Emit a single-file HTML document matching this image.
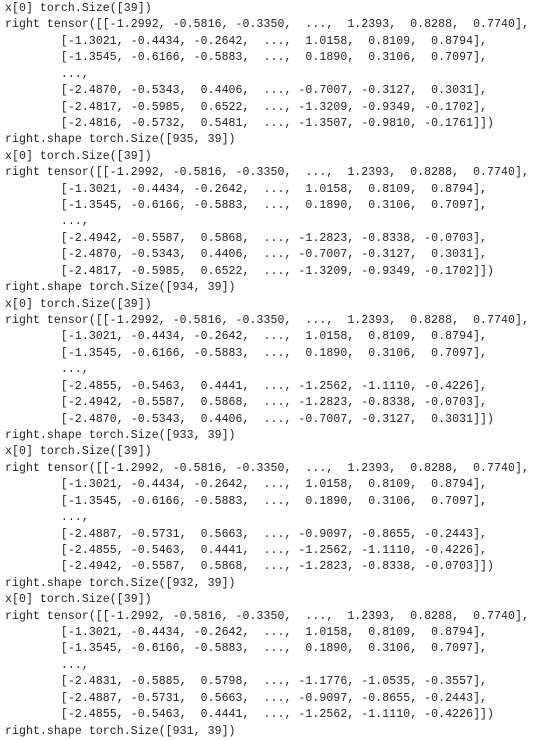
<!DOCTYPE html>
<html><head><style>
html,body{margin:0;padding:0;background:#fff;}
pre{margin:0;padding:1px 0 0 5px;font-family:"Liberation Mono",monospace;font-size:11.5px;letter-spacing:0.085px;line-height:16.42px;color:#212121;white-space:pre;}
</style></head><body><pre>x[0] torch.Size([39])
right tensor([[-1.2992, -0.5816, -0.3350,  ...,  1.2393,  0.8288,  0.7740],
        [-1.3021, -0.4434, -0.2642,  ...,  1.0158,  0.8109,  0.8794],
        [-1.3545, -0.6166, -0.5883,  ...,  0.1890,  0.3106,  0.7097],
        ...,
        [-2.4870, -0.5343,  0.4406,  ..., -0.7007, -0.3127,  0.3031],
        [-2.4817, -0.5985,  0.6522,  ..., -1.3209, -0.9349, -0.1702],
        [-2.4816, -0.5732,  0.5481,  ..., -1.3507, -0.9810, -0.1761]])
right.shape torch.Size([935, 39])
x[0] torch.Size([39])
right tensor([[-1.2992, -0.5816, -0.3350,  ...,  1.2393,  0.8288,  0.7740],
        [-1.3021, -0.4434, -0.2642,  ...,  1.0158,  0.8109,  0.8794],
        [-1.3545, -0.6166, -0.5883,  ...,  0.1890,  0.3106,  0.7097],
        ...,
        [-2.4942, -0.5587,  0.5868,  ..., -1.2823, -0.8338, -0.0703],
        [-2.4870, -0.5343,  0.4406,  ..., -0.7007, -0.3127,  0.3031],
        [-2.4817, -0.5985,  0.6522,  ..., -1.3209, -0.9349, -0.1702]])
right.shape torch.Size([934, 39])
x[0] torch.Size([39])
right tensor([[-1.2992, -0.5816, -0.3350,  ...,  1.2393,  0.8288,  0.7740],
        [-1.3021, -0.4434, -0.2642,  ...,  1.0158,  0.8109,  0.8794],
        [-1.3545, -0.6166, -0.5883,  ...,  0.1890,  0.3106,  0.7097],
        ...,
        [-2.4855, -0.5463,  0.4441,  ..., -1.2562, -1.1110, -0.4226],
        [-2.4942, -0.5587,  0.5868,  ..., -1.2823, -0.8338, -0.0703],
        [-2.4870, -0.5343,  0.4406,  ..., -0.7007, -0.3127,  0.3031]])
right.shape torch.Size([933, 39])
x[0] torch.Size([39])
right tensor([[-1.2992, -0.5816, -0.3350,  ...,  1.2393,  0.8288,  0.7740],
        [-1.3021, -0.4434, -0.2642,  ...,  1.0158,  0.8109,  0.8794],
        [-1.3545, -0.6166, -0.5883,  ...,  0.1890,  0.3106,  0.7097],
        ...,
        [-2.4887, -0.5731,  0.5663,  ..., -0.9097, -0.8655, -0.2443],
        [-2.4855, -0.5463,  0.4441,  ..., -1.2562, -1.1110, -0.4226],
        [-2.4942, -0.5587,  0.5868,  ..., -1.2823, -0.8338, -0.0703]])
right.shape torch.Size([932, 39])
x[0] torch.Size([39])
right tensor([[-1.2992, -0.5816, -0.3350,  ...,  1.2393,  0.8288,  0.7740],
        [-1.3021, -0.4434, -0.2642,  ...,  1.0158,  0.8109,  0.8794],
        [-1.3545, -0.6166, -0.5883,  ...,  0.1890,  0.3106,  0.7097],
        ...,
        [-2.4831, -0.5885,  0.5798,  ..., -1.1776, -1.0535, -0.3557],
        [-2.4887, -0.5731,  0.5663,  ..., -0.9097, -0.8655, -0.2443],
        [-2.4855, -0.5463,  0.4441,  ..., -1.2562, -1.1110, -0.4226]])
right.shape torch.Size([931, 39])</pre></body></html>
